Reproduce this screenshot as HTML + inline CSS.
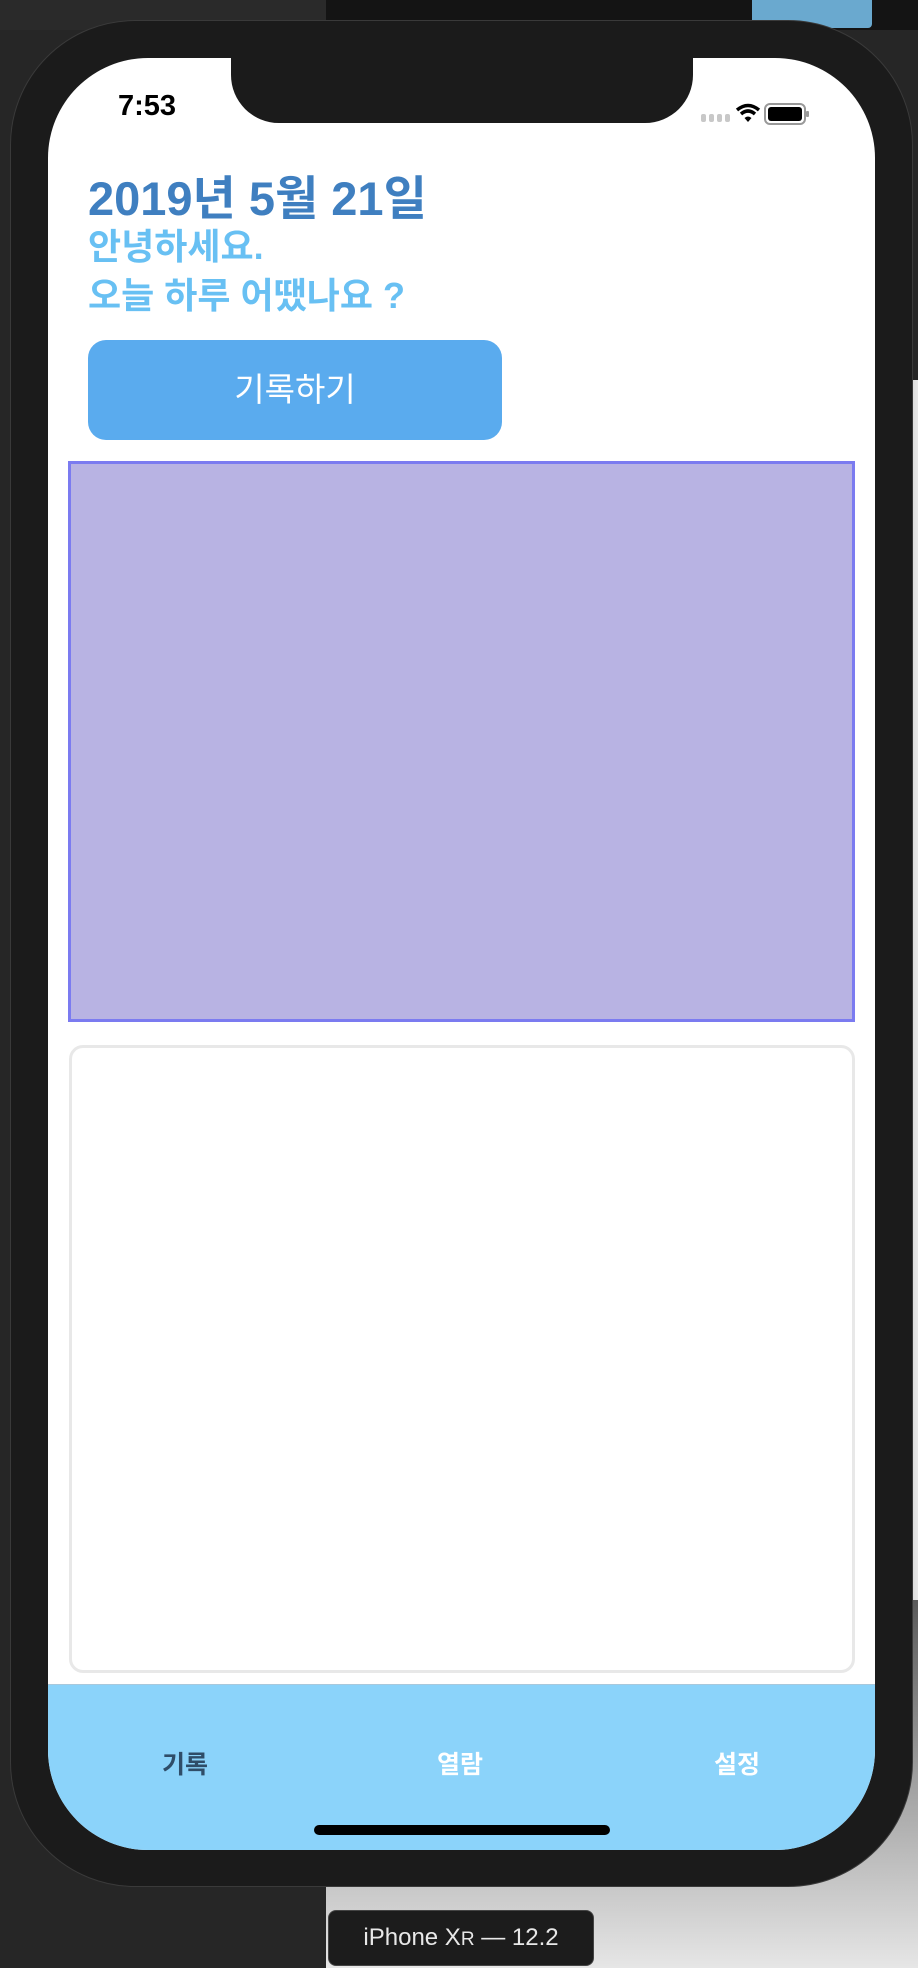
<!DOCTYPE html>
<html><head><meta charset="utf-8">
<style>
*{margin:0;padding:0;box-sizing:border-box}
html,body{width:918px;height:1968px;overflow:hidden}
body{position:relative;background:#262626;font-family:"Liberation Sans","Noto Sans CJK KR",sans-serif}
.rightbg{position:absolute;left:326px;top:1600px;width:592px;height:368px;background:linear-gradient(180deg,#5a5a5a 0%,#9a9a9a 45%,#e6e6e6 100%)}
.rightstrip{position:absolute;left:880px;top:380px;width:38px;height:1588px;background:linear-gradient(90deg,#999 0%,#e8e8e8 100%)}
.topbar{position:absolute;left:0;top:0;width:918px;height:30px;background:#2a2a2a}
.topdark{position:absolute;left:326px;top:0;width:592px;height:30px;background:#141414}
.topblue{position:absolute;left:752px;top:0;width:120px;height:28px;background:#6aa9cf;border-radius:0 0 4px 4px}
.phone{position:absolute;left:10px;top:20px;width:903px;height:1867px;background:#1b1b1b;border-radius:125px;border:1px solid #3a3a3a}
.screen{position:absolute;left:48px;top:58px;width:827px;height:1792px;background:#fff;border-radius:100px;overflow:hidden}
.notch{position:absolute;left:183px;top:-2px;width:462px;height:67px;background:#1b1b1b;border-radius:0 0 48px 48px}
.time{position:absolute;left:70px;top:32px;font-size:29px;font-weight:bold;color:#000;font-family:"Liberation Sans",sans-serif}
.date{position:absolute;left:40px;top:102px;font-size:47px;font-weight:bold;color:#3f7fc0;letter-spacing:0}
.g1{position:absolute;left:40px;top:164px;font-size:36px;font-weight:bold;color:#68c0f3;line-height:49px}
.btn{position:absolute;left:40px;top:282px;width:414px;height:100px;background:#5aabee;border-radius:18px;color:#fff;font-size:33px;text-align:center;line-height:100px}
.purple{position:absolute;left:20px;top:403px;width:787px;height:561px;background:#b8b3e3;border:3px solid #7b7bf0}
.card{position:absolute;left:21px;top:987px;width:786px;height:628px;border:3px solid #e8e8e8;border-radius:14px}
.tab{position:absolute;left:0;top:1626px;width:827px;height:166px;background:#8bd3fa;border-top:1px solid #a8c8dc}
.tab span{position:absolute;top:60px;font-size:25px;font-weight:bold;width:100px;text-align:center}
.home{position:absolute;left:266px;top:140px;width:296px;height:10px;background:#000;border-radius:5px}
.label{position:absolute;left:328px;top:1910px;width:266px;height:56px;background:#1c1c1c;border-radius:8px;border:1px solid #444;color:#e8e8e8;font-size:24px;text-align:center;line-height:54px}
</style></head><body>
<div class="rightstrip"></div>
<div class="rightbg"></div>
<div class="topbar"></div><div class="topdark"></div><div class="topblue"></div>
<div class="phone"></div>
<div class="screen">
  <div class="notch"></div>
  <div class="time">7:53</div>
  <svg style="position:absolute;left:653px;top:44px" width="110" height="24" viewBox="0 0 110 24">
    <rect x="0" y="12" width="5" height="8" rx="2" fill="#c8c8c8"/><rect x="8" y="12" width="5" height="8" rx="2" fill="#c8c8c8"/><rect x="16" y="12" width="5" height="8" rx="2" fill="#c8c8c8"/><rect x="24" y="12" width="5" height="8" rx="2" fill="#c8c8c8"/>
    <path d="M36 8 Q47 -1 58 8" stroke="#000" stroke-width="3.5" fill="none"/><path d="M40 12 Q47 6 54 12" stroke="#000" stroke-width="3.5" fill="none"/><path d="M43.5 16 L47 20 L50.5 16 Q47 13 43.5 16Z" fill="#000"/>
    <rect x="64" y="2" width="40" height="20" rx="5" fill="none" stroke="#999" stroke-width="2"/><rect x="67" y="5" width="34" height="14" rx="3" fill="#000"/><rect x="105" y="9" width="3" height="6" rx="1" fill="#999"/>
  </svg>
  <div class="date">2019년 5월 21일</div>
  <div class="g1">안녕하세요.<br>오늘 하루 어땠나요 ?</div>
  <div class="btn">기록하기</div>
  <div class="purple"></div>
  <div class="card"></div>
  <div class="tab">
    <span style="left:87px;color:#2f4d68">기록</span>
    <span style="left:362px;color:#fff">열람</span>
    <span style="left:639px;color:#fff">설정</span>
    <div class="home"></div>
  </div>
</div>
<div class="label">iPhone X<span style="font-size:19px">R</span> — 12.2</div>
</body></html>
